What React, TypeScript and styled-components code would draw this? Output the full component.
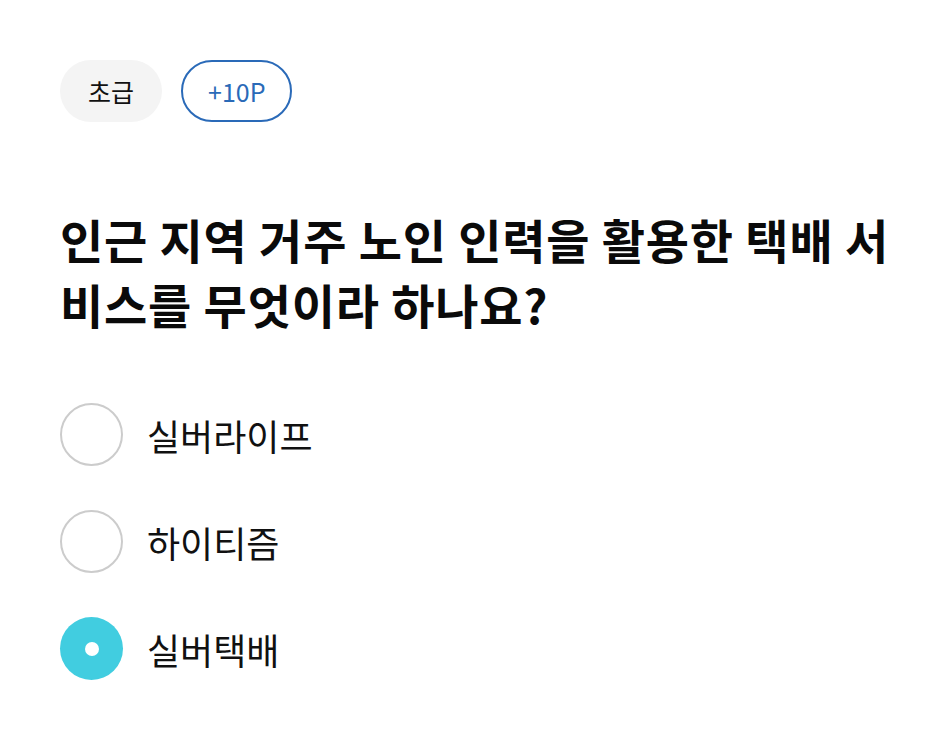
import { useState } from 'react';
import styled, { createGlobalStyle } from 'styled-components';

const GlobalStyle = createGlobalStyle`
    html, body {
        margin: 0;
        padding: 0;
        background: #ffffff;
    }
    body {
        font-family: "Noto Sans CJK KR", "Noto Sans", sans-serif;
        color: #111111;
    }
`;

const StyledQuiz = styled.div`
    padding: 60px 50px 0 60px;
    display: flex;
    flex-direction: column;
`;

const ChipRow = styled.div`
    display: flex;
    gap: 19px;
`;

const Chip = styled.span<{ $outlined?: boolean }>`
    box-sizing: border-box;
    height: 62px;
    padding: 0 ${p => p.$outlined ? 25 : 28}px;
    border-radius: 31px;
    display: inline-flex;
    align-items: center;
    font-size: 25px;
    line-height: 1;
    background: ${p => p.$outlined ? '#ffffff' : '#f4f4f4'};
    color: ${p => p.$outlined ? '#2a6ab8' : '#111111'};
    border: ${p => p.$outlined ? '2px solid #2a6ab8' : 'none'};
`;

const Question = styled.h1`
    margin: 84px 0 0 0;
    font-size: 47px;
    font-weight: 700;
    line-height: 65px;
    letter-spacing: 0.8px;
    word-break: break-all;
    color: #0a0a0a;
`;

const OptionList = styled.div`
    margin-top: 67px;
    display: flex;
    flex-direction: column;
    gap: 44px;
`;

const Option = styled.label`
    display: flex;
    align-items: center;
    gap: 24px;
    cursor: pointer;
    font-size: 36px;
    line-height: 1;
    color: #111111;
`;

const Radio = styled.span<{ $checked: boolean }>`
    box-sizing: border-box;
    flex: none;
    width: 63px;
    height: 63px;
    border-radius: 50%;
    display: flex;
    align-items: center;
    justify-content: center;
    background: ${p => p.$checked ? '#41cde0' : '#ffffff'};
    border: ${p => p.$checked ? 'none' : '2.5px solid #cccccc'};
    &::after {
        content: '';
        display: ${p => p.$checked ? 'block' : 'none'};
        width: 14px;
        height: 14px;
        border-radius: 50%;
        background: #ffffff;
    }
`;

const options = ['실버라이프', '하이티즘', '실버택배'];

export default function App() {
    const [selected, setSelected] = useState(2);

    return <>
        <GlobalStyle />
        <StyledQuiz>
            <ChipRow>
                <Chip>초급</Chip>
                <Chip $outlined>+10P</Chip>
            </ChipRow>
            <Question>인근 지역 거주 노인 인력을 활용한 택배 서비스를 무엇이라 하나요?</Question>
            <OptionList>
                {options.map((label, index) => <Option key={label} onClick={() => setSelected(index)}>
                    <Radio $checked={selected === index} />
                    {label}
                </Option>)}
            </OptionList>
        </StyledQuiz>
    </>;
}
